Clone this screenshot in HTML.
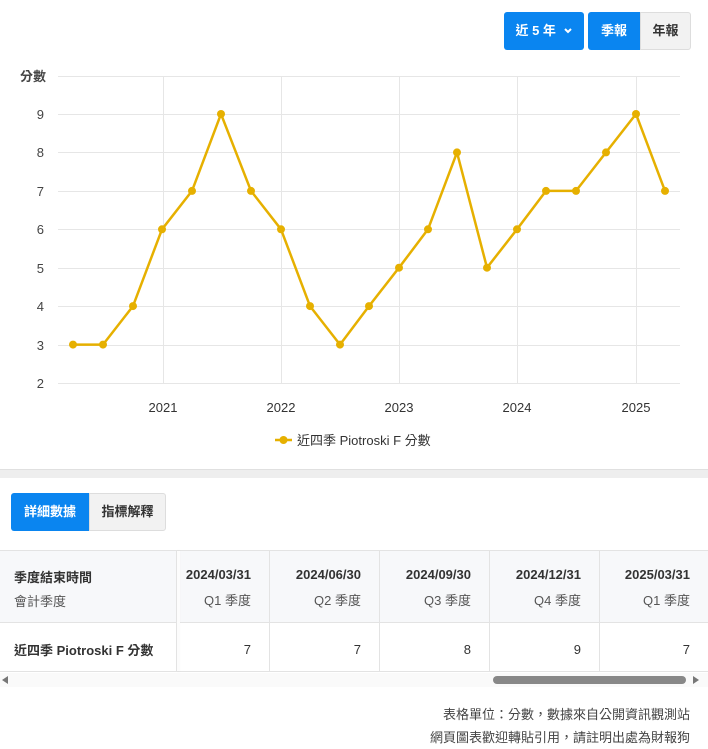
<!DOCTYPE html>
<html><head><meta charset="utf-8"><style>
*{margin:0;padding:0;box-sizing:border-box}
body{width:708px;height:749px;background:#fff;font-family:"Liberation Sans","Noto Sans CJK TC",sans-serif;color:#333;position:relative;overflow:hidden}
.btn{position:absolute;height:38px;line-height:38px;font-size:13px;font-weight:bold;text-align:center;border-radius:3px}
.blue{background:#0a85f0;color:#fff}
.gray{background:#f2f2f2;color:#333;border:1px solid #ddd}
.t{position:absolute;font-size:13px}
.cell{position:absolute;border-right:1px solid #e3e3e3;text-align:right;padding-right:18px}
</style></head><body>
<div class="btn blue" style="left:504px;top:12px;width:80px">近 5 年 <svg width="10" height="8" viewBox="0 0 10 8" style="margin-left:3px"><path d="M2 2 L5 5 L8 2" stroke="#fff" stroke-width="2" fill="none"/></svg></div>
<div class="btn blue" style="left:588px;top:12px;width:52px;border-radius:3px 0 0 3px">季報</div>
<div class="btn gray" style="left:640px;top:12px;width:51px;border-radius:0 3px 3px 0;line-height:36px">年報</div>

<svg width="708" height="470" style="position:absolute;left:0;top:0" font-family="Liberation Sans, Noto Sans CJK TC, sans-serif">
<g stroke="#e6e6e6" stroke-width="1">
<line x1="58" y1="76.5" x2="680" y2="76.5"/><line x1="58" y1="114.5" x2="680" y2="114.5"/><line x1="58" y1="152.5" x2="680" y2="152.5"/><line x1="58" y1="191.5" x2="680" y2="191.5"/><line x1="58" y1="229.5" x2="680" y2="229.5"/><line x1="58" y1="268.5" x2="680" y2="268.5"/><line x1="58" y1="306.5" x2="680" y2="306.5"/><line x1="58" y1="345.5" x2="680" y2="345.5"/><line x1="58" y1="383.5" x2="680" y2="383.5"/>
<line x1="163.5" y1="76" x2="163.5" y2="383"/><line x1="281.5" y1="76" x2="281.5" y2="383"/><line x1="399.5" y1="76" x2="399.5" y2="383"/><line x1="517.5" y1="76" x2="517.5" y2="383"/><line x1="636.5" y1="76" x2="636.5" y2="383"/>
</g>
<g font-size="13" fill="#444" text-anchor="end">
<text x="46" y="81" font-weight="bold">分數</text>
<text x="44" y="119">9</text><text x="44" y="157">8</text><text x="44" y="196">7</text><text x="44" y="234">6</text><text x="44" y="273">5</text><text x="44" y="311">4</text><text x="44" y="350">3</text><text x="44" y="388">2</text>
</g>
<g font-size="13" fill="#333" text-anchor="middle">
<text x="163" y="412">2021</text><text x="281" y="412">2022</text><text x="399" y="412">2023</text><text x="517" y="412">2024</text><text x="636" y="412">2025</text>
</g>
<polyline fill="none" stroke="#e6b000" stroke-width="2.5" stroke-linejoin="round" points="73,344.6 103,344.6 133,306.1 162,229.3 192,190.9 221,114 251,190.9 281,229.3 310,306.1 340,344.6 369,306.1 399,267.7 428,229.3 457,152.4 487,267.7 517,229.3 546,190.9 576,190.9 606,152.4 636,114 665,190.9"/>
<g fill="#e6b000">
<circle cx="73" cy="344.6" r="4"/><circle cx="103" cy="344.6" r="4"/><circle cx="133" cy="306.1" r="4"/><circle cx="162" cy="229.3" r="4"/><circle cx="192" cy="190.9" r="4"/><circle cx="221" cy="114" r="4"/><circle cx="251" cy="190.9" r="4"/><circle cx="281" cy="229.3" r="4"/><circle cx="310" cy="306.1" r="4"/><circle cx="340" cy="344.6" r="4"/><circle cx="369" cy="306.1" r="4"/><circle cx="399" cy="267.7" r="4"/><circle cx="428" cy="229.3" r="4"/><circle cx="457" cy="152.4" r="4"/><circle cx="487" cy="267.7" r="4"/><circle cx="517" cy="229.3" r="4"/><circle cx="546" cy="190.9" r="4"/><circle cx="576" cy="190.9" r="4"/><circle cx="606" cy="152.4" r="4"/><circle cx="636" cy="114" r="4"/><circle cx="665" cy="190.9" r="4"/>
<line x1="275" y1="440" x2="292" y2="440" stroke="#e6b000" stroke-width="2.5"/><circle cx="283.5" cy="440" r="4"/>
</g>
<text x="297" y="445" font-size="13" fill="#333">近四季 Piotroski F 分數</text>
</svg>

<div style="position:absolute;left:0;top:469px;width:708px;height:9px;background:#eee;border-top:1px solid #e0e0e0"></div>

<div class="btn blue" style="left:11px;top:493px;width:78px;border-radius:3px 0 0 3px">詳細數據</div>
<div class="btn gray" style="left:89px;top:493px;width:77px;border-radius:0 3px 3px 0;line-height:36px">指標解釋</div>

<div style="position:absolute;left:0;top:550px;width:708px;height:122px;border-top:1px solid #e3e3e3;border-bottom:1px solid #e3e3e3"></div>
<div style="position:absolute;left:0;top:551px;width:708px;height:72px;background:#f7f8fa;border-bottom:1px solid #e3e3e3"></div>

<div class="cell" style="left:160px;top:551px;width:110px;height:120px;padding-right:18px">
<div style="margin-top:16px;font-weight:bold;font-size:13px">2024/03/31</div><div style="margin-top:8px;font-size:13px;color:#555">Q1 季度</div><div style="margin-top:33px;font-size:13px">7</div></div>
<div class="cell" style="left:270px;top:551px;width:110px;height:120px">
<div style="margin-top:16px;font-weight:bold;font-size:13px">2024/06/30</div><div style="margin-top:8px;font-size:13px;color:#555">Q2 季度</div><div style="margin-top:33px;font-size:13px">7</div></div>
<div class="cell" style="left:380px;top:551px;width:110px;height:120px">
<div style="margin-top:16px;font-weight:bold;font-size:13px">2024/09/30</div><div style="margin-top:8px;font-size:13px;color:#555">Q3 季度</div><div style="margin-top:33px;font-size:13px">8</div></div>
<div class="cell" style="left:490px;top:551px;width:110px;height:120px">
<div style="margin-top:16px;font-weight:bold;font-size:13px">2024/12/31</div><div style="margin-top:8px;font-size:13px;color:#555">Q4 季度</div><div style="margin-top:33px;font-size:13px">9</div></div>
<div class="cell" style="left:600px;top:551px;width:108px;height:120px;border-right:none">
<div style="margin-top:16px;font-weight:bold;font-size:13px">2025/03/31</div><div style="margin-top:8px;font-size:13px;color:#555">Q1 季度</div><div style="margin-top:33px;font-size:13px">7</div></div>

<div style="position:absolute;left:0;top:550px;width:180px;height:122px;background:#fff;border-top:1px solid #e3e3e3;border-bottom:1px solid #e3e3e3"></div>
<div style="position:absolute;left:0;top:551px;width:177px;height:72px;background:#f7f8fa;border-bottom:1px solid #e3e3e3"></div>
<div style="position:absolute;left:176px;top:550px;width:1px;height:122px;background:#e3e3e3;box-shadow:2px 0 3px rgba(0,0,0,.06)"></div>
<div class="t" style="left:14px;top:567px;font-weight:bold">季度結束時間</div>
<div class="t" style="left:14px;top:591px;color:#555">會計季度</div>
<div class="t" style="left:14px;top:640px;font-weight:bold">近四季 Piotroski F 分數</div>

<div style="position:absolute;left:0;top:673px;width:708px;height:14px;background:#fafafa"></div>
<svg width="708" height="14" style="position:absolute;left:0;top:673px"><path d="M2 7 L8 3 L8 11 Z" fill="#777"/><path d="M693 3 L699 7 L693 11 Z" fill="#777"/><rect x="493" y="3" width="193" height="8" rx="4" fill="#888"/></svg>

<div class="t" style="right:18px;top:704px;color:#444">表格單位：分數，數據來自公開資訊觀測站</div>
<div class="t" style="right:18px;top:727px;color:#444">網頁圖表歡迎轉貼引用，請註明出處為財報狗</div>
</body></html>
